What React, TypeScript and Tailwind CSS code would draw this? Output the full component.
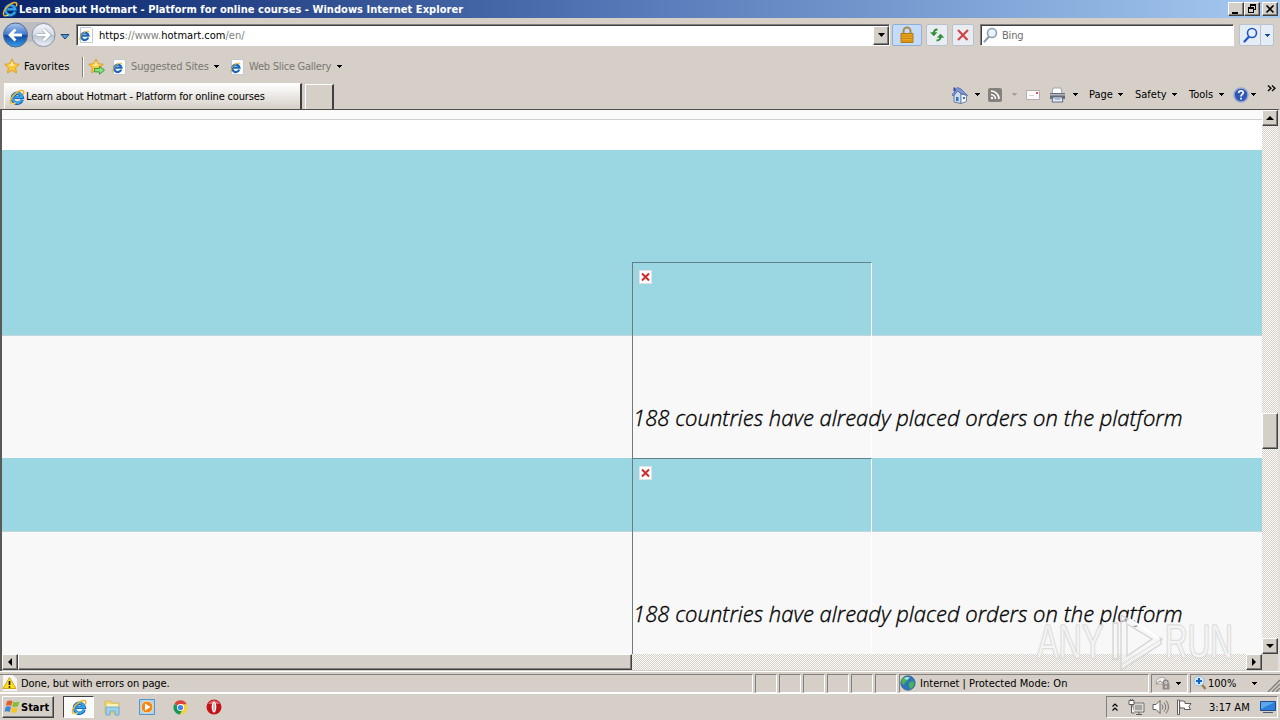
import type { ReactNode } from 'react'
import clsx from 'clsx'

const raised =
  'border border-t-white border-l-white border-r-[#404040] border-b-[#404040] bg-[#d4d0c8] shadow-[inset_-1px_-1px_0_#808080]'
const sunken = 'border border-t-[#808080] border-l-[#808080] border-r-white border-b-white'
const track = 'bg-[repeating-conic-gradient(#d4d0c8_0_25%,#fcfbfa_0_50%)] bg-[length:2px_2px]'

function Arrow({ className, fill = '#000' }: { className?: string; fill?: string }) {
  return (
    <svg width="5" height="3" viewBox="0 0 5 3" className={clsx('shrink-0', className)} shapeRendering="crispEdges">
      <path d="M0 0h5v1H4v1H3v1H2V2H1V1H0z" fill={fill} />
    </svg>
  )
}

function IeLogo({ size = 16, className }: { size?: number; className?: string }) {
  return (
    <svg width={size} height={size} viewBox="0 0 16 16" fill="none" className={clsx('shrink-0', className)}>
      <path d="M13.2 10.6A5 5 0 1 1 13.3 8.4H5.2" stroke="#135bab" strokeWidth="3.4" />
      <path d="M13 10.6A4.9 4.9 0 1 1 13.2 8.2H5.4" stroke="#36a8ea" strokeWidth="2" />
      <path d="M2.4 14.6C-.2 12.8 3 6.6 8 3.3c3.3-2.2 6.6-2.6 6.8-.4.1 1-.4 1.9-1 2.7" stroke="#eeb52a" strokeWidth="1.5" />
      <path d="M2.4 14.6c1 .6 2.6.1 4.2-.8" stroke="#fbd75c" strokeWidth="1.4" />
    </svg>
  )
}

function IePage({ className }: { className?: string }) {
  return (
    <svg width="15" height="16" viewBox="0 0 15 16" fill="none" className={clsx('shrink-0', className)}>
      <path d="M2.500.5h10.500l1.500 1.500v13.500h-12z" fill="#fff" stroke="#c3c9d1" />
      <path d="M10.300 10.700A3.700 3.700 0 1 1 10.500 8.600H4.200" stroke="#1a69bd" strokeWidth="2.200" />
      <path d="M2.200 13.500C.6 11.800 3.600 6.700 7.100 4.900c2-1.100 4.200-1 4 .6" stroke="#e5b02f" />
    </svg>
  )
}

function Star({ add, className }: { add?: boolean; className?: string }) {
  return (
    <svg width="17" height="17" viewBox="0 0 17 17" className={clsx('shrink-0', className)}>
      <path
        d="M8 .9l2.200 4.800 5.100.6-3.800 3.500 1 5.100L8 12.400l-4.500 2.500 1-5.100L.7 6.300l5.100-.6z"
        fill="#fcc736"
        stroke="#dda02c"
      />
      <path d="M8 3.200l1.300 3.300 3 .4-5.500 1.200-3.300-1 3.200-.5z" fill="#fff0a3" />
      {add && <path d="M6.500 10.500h5V8.200l5 4-5 4v-2.300h-5z" fill="#8ddf7a" stroke="#2c963b" strokeWidth=".9" />}
    </svg>
  )
}

function Lens({ className, glass, handle }: { className?: string; glass: string; handle: string }) {
  return (
    <svg width="15" height="16" viewBox="0 0 15 16" fill="none" className={clsx('shrink-0', className)}>
      <path d="M6 9.500L1.500 14.500" stroke={handle} strokeWidth="2.200" strokeLinecap="round" />
      <circle cx="9" cy="6" r="4.500" fill={glass} stroke={handle} strokeWidth="1.600" />
    </svg>
  )
}

function TitleBar() {
  return (
    <header className="flex h-[18px] items-center bg-linear-to-r from-[#0a246a] via-[#587ab9] to-[#a6caf0] pr-[2px] pl-[2px]">
      <IeLogo />
      <h1 className="mt-[2px] ml-px flex-1 text-[11px] font-bold tracking-[0.04px] whitespace-nowrap text-white">
        Learn about Hotmart - Platform for online courses - Windows Internet Explorer
      </h1>
      <div className={clsx(raised, 'h-[14px] w-4')}>
        <svg width="14" height="12" viewBox="0 0 14 12">
          <path d="M3 9h6v2H3z" />
        </svg>
      </div>
      <div className={clsx(raised, 'mr-[2px] h-[14px] w-4')}>
        <svg width="14" height="12" viewBox="0 0 14 12" shapeRendering="crispEdges">
          <path d="M5 1h6v2H5zM10 3h1v4h-1zM8 6h2v1H8zM5 3h1v1H5zM3 4h6v2H3zM3 6h1v4H3zM8 6h1v4H8zM3 9h6v1H3z" />
        </svg>
      </div>
      <div className={clsx(raised, 'h-[14px] w-4')}>
        <svg width="14" height="12" viewBox="0 0 14 12">
          <path d="M3.500 2.500l7 7m0-7l-7 7" stroke="#000" strokeWidth="1.600" />
        </svg>
      </div>
    </header>
  )
}

function ToolButton({ className, children }: { className?: string; children: ReactNode }) {
  return (
    <div
      className={clsx(
        'flex h-[22px] shrink-0 items-center justify-center rounded-[2px] border',
        className
      )}
    >
      {children}
    </div>
  )
}

function AddressRow() {
  return (
    <div className="flex h-[34px] items-center">
      <svg width="58" height="30" viewBox="0 0 58 30" className="ml-[2px] shrink-0">
        <defs>
          <linearGradient id="back" x2="0" y2="1">
            <stop offset="0" stopColor="#a9c7ed" />
            <stop offset=".48" stopColor="#3f78cd" />
            <stop offset=".52" stopColor="#11479f" />
            <stop offset="1" stopColor="#3aa0ee" />
          </linearGradient>
          <linearGradient id="forward" x2="0" y2="1">
            <stop offset="0" stopColor="#f4f7fb" />
            <stop offset=".5" stopColor="#d2dae6" />
            <stop offset=".52" stopColor="#b9c3d2" />
            <stop offset="1" stopColor="#eff3f8" />
          </linearGradient>
        </defs>
        <path d="M13 2h28a12.500 12.500 0 0 1 0 25q-7 0-10-5h-6q-5 6-12 5" fill="#bdbcc0" />
        <circle cx="13.500" cy="15" r="12" fill="url(#back)" stroke="#52698f" />
        <circle cx="41.500" cy="15" r="11.500" fill="url(#forward)" stroke="#8b95a6" />
        <path d="M20 15H8m5.500-5.500L8 15l5.500 5.500" fill="none" stroke="#fff" strokeWidth="2.800" />
        <path d="M35 15h12m-5.500-5.500L47 15l-5.500 5.500" fill="none" stroke="#9da8b7" strokeWidth="4" />
        <path d="M35 15h12m-5.500-5.500L47 15l-5.500 5.500" fill="none" stroke="#fff" strokeWidth="2.600" />
      </svg>
      <svg width="10" height="6" viewBox="0 0 10 6" className="mt-[3px] shrink-0">
        <path d="M1 .5h8L5 5z" fill="#4c9de0" stroke="#23466f" />
      </svg>
      <div className="ml-[6px] flex h-[22px] w-[814px] items-center border border-t-[#808080] border-r-white border-b-white border-l-[#808080] bg-white pl-px shadow-[inset_1px_1px_0_#404040]">
        <IePage />
        <p className="mt-[2px] ml-[6px] flex-1 text-[11px] tracking-[0.02px] whitespace-nowrap text-[#808080]">
          <span className="text-black">https</span>://www.<span className="text-black">hotmart.com</span>/en/
        </p>
        <div className={clsx(raised, 'flex h-[19px] w-4 items-center justify-center')}>
          <svg width="7" height="4" viewBox="0 0 7 4">
            <path d="M0 0h7L3.500 4z" />
          </svg>
        </div>
      </div>
      <ToolButton className="ml-[2px] w-[30px] border-[#8fafd8] bg-[#c5dcf9]">
        <svg width="16" height="18" viewBox="0 0 16 18">
          <path d="M4.500 8V5a3.500 3.500 0 0 1 7 0v3" fill="none" stroke="#a58c50" strokeWidth="2" />
          <path d="M2 7.500h12v9H2z" fill="#e8a722" stroke="#b27912" />
          <path d="M2 10h12M2 12.500h12M2 15h12" stroke="#c8860f" />
        </svg>
      </ToolButton>
      <ToolButton className="ml-1 w-[22px] border-[#b9c1cc] bg-[#e9edf2]">
        <svg width="16" height="16" viewBox="0 0 16 16" fill="#2e8b34" stroke="#2e8b34" strokeWidth="1.800">
          <path d="M8.500 2.500Q5 2.500 4.800 6M7.500 13.500Q11.300 13.500 11.500 10" fill="none" />
          <path d="M1.500 5.500h6.500L4.800 9zM8.300 10.500h6.500L11.500 7z" strokeWidth=".4" />
        </svg>
      </ToolButton>
      <ToolButton className="ml-1 w-[22px] border-[#b9c1cc] bg-[#e9edf2]">
        <svg width="14" height="14" viewBox="0 0 14 14" fill="none" stroke="#d0454a" strokeWidth="2.200">
          <path d="M2 2l9.500 10M12 2L2 12" />
        </svg>
      </ToolButton>
      <div className="ml-[6px] flex h-[22px] w-[254px] items-center border border-t-[#808080] border-r-white border-b-white border-l-[#808080] bg-white shadow-[inset_1px_1px_0_#404040]">
        <Lens className="ml-[2px]" glass="#e9f3fb" handle="#8f9fae" />
        <span className="mt-[2px] ml-[4px] text-[11px] tracking-[-0.2px] text-[#6d6d6d]">Bing</span>
      </div>
      <ToolButton className="ml-[5px] w-[22px] border-[#b9c1cc] bg-[#e4ecf6]">
        <Lens glass="#e3effd" handle="#2457c3" />
      </ToolButton>
      <ToolButton className="-ml-px w-[14px] border-[#b9c1cc] bg-[#e4ecf6]">
        <Arrow fill="#174a9c" />
      </ToolButton>
    </div>
  )
}

function FavoritesRow() {
  return (
    <div className="flex h-[29px] items-center text-[11px] whitespace-nowrap">
      <Star className="ml-1" />
      <span className="mt-[2px] ml-[3px] w-[58px] tracking-[0.1px]">Favorites</span>
      <div className="h-[20px] w-[2px] border-l border-[#808080] bg-white" />
      <Star add className="ml-[4px]" />
      <IePage className="ml-[6px]" />
      <span className="mt-[2px] ml-[5px] w-[83px] tracking-[-0.14px] text-[#7b7772]">Suggested Sites</span>
      <Arrow />
      <IePage className="ml-[10px]" />
      <span className="mt-[2px] ml-[5px] w-[88px] tracking-[-0.25px] text-[#7b7772]">Web Slice Gallery</span>
      <Arrow />
    </div>
  )
}

function CommandBar() {
  return (
    <div className="flex h-[27px] items-center text-[11px] whitespace-nowrap [&_span]:mt-[2px]">
      <svg width="18" height="18" viewBox="0 0 18 18">
        <path d="M3 9v7l7 1.500V8L7 4z" fill="#cfdcec" stroke="#6b7c9f" />
        <path d="M10 8v9.500l5.500-2V9z" fill="#eef4fb" stroke="#7588aa" />
        <path d="M1 9l5.500-7.500L10 3l6.500 6.500L10 7.500 6.500 5 2.500 10z" fill="#7f9ad2" stroke="#4a64ab" strokeWidth=".8" />
        <path d="M2.500 1.500h2V5h-2z" fill="#2d449c" />
        <path d="M5 11h2.500v4H5zM12 11h2v2h-2z" fill="#2f74c0" />
      </svg>
      <Arrow className="ml-[6px]" />
      <svg width="14" height="14" viewBox="0 0 14 14" className="ml-[8px]" fill="none" stroke="#fff" strokeWidth="1.600">
        <rect width="14" height="14" rx="2" fill="#85827e" stroke="none" />
        <path d="M3 6.500A4.500 4.500 0 0 1 7.500 11M3 3a8 8 0 0 1 8 8" />
        <circle cx="4" cy="10" r="1.200" fill="#fff" stroke="none" />
      </svg>
      <Arrow className="ml-[10px]" fill="#a39f99" />
      <svg width="14" height="10" viewBox="0 0 14 10" className="ml-[9px]">
        <path d="M.5.5h13v9H.5z" fill="#fcfafa" stroke="#b2adb0" />
        <path d="M10 2h2v2h-2z" fill="#d85663" />
        <path d="M3 5.500h5" stroke="#d6cdd4" />
      </svg>
      <svg width="17" height="16" viewBox="0 0 17 16" className="ml-[9px]">
        <path d="M4 1h8l1 6H3z" fill="#fff" stroke="#a1a5ac" />
        <path d="M1 6h15v6H1z" fill="#666b75" />
        <path d="M1 7h15v1.500H1z" fill="#b3b8bf" />
        <path d="M4 10h9l1 5H3z" fill="#e7eef7" stroke="#676e7a" />
        <path d="M5.500 12h6" stroke="#588bc0" />
      </svg>
      <Arrow className="ml-[7px]" />
      <span className="ml-[11px] w-[29px]">Page</span>
      <Arrow />
      <span className="ml-[12px] w-[36px]">Safety</span>
      <Arrow className="ml-px" />
      <span className="ml-[12px] w-[30px]">Tools</span>
      <Arrow />
      <svg width="16" height="16" viewBox="0 0 16 16" className="ml-[9px]">
        <circle cx="8" cy="8" r="7" fill="#3258b5" stroke="#98a9cf" strokeWidth="1.500" />
        <path d="M5.700 6c0-3.200 4.800-2.800 4.500 0C10 7.500 8 7.300 8 9.400M8 10.800v1.800" stroke="#fff" strokeWidth="1.700" fill="none" />
      </svg>
      <Arrow className="ml-[2px]" />
      <svg width="9" height="7" viewBox="0 0 9 7" className="mr-1 ml-[11px] -mt-[13px]" fill="none" stroke="#000" strokeWidth="1.300">
        <path d="M1 .5l3 2.700L1 6M5 .5l3 2.700L5 6" />
      </svg>
    </div>
  )
}

function TabRow() {
  return (
    <div className="flex h-[28px] justify-between">
      <div className="flex items-end pl-1">
        <div className="flex h-[26px] w-[298px] items-center border-t border-r-2 border-l border-t-white border-r-[#404040] border-l-white bg-linear-to-b from-white to-[#d5cfc7] pl-[4px]">
          <IeLogo />
          <span className="mt-[2px] ml-px text-[11px] tracking-[-0.16px] whitespace-nowrap">
            Learn about Hotmart - Platform for online courses
          </span>
        </div>
        <div className="ml-[3px] h-[25px] w-[29px] border-t border-r-2 border-l border-t-white border-r-[#404040] border-l-white" />
      </div>
      <CommandBar />
    </div>
  )
}

function BrokenImage({ className }: { className: string }) {
  return (
    <figure
      className={clsx(
        'absolute left-[630px] h-[196px] w-[240px] border-t border-r border-l border-t-[#5f8188] border-r-white border-l-[#707b7d]',
        className
      )}
    >
      <svg width="13" height="14" viewBox="0 0 13 14" className="mt-[7px] ml-[6px]">
        <path d="M.5.500h12v13H.5z" fill="#fff" stroke="#e6e2e1" />
        <path d="M3 3.500l7 7m0-7l-7 7" stroke="#cf2b2b" strokeWidth="2" />
      </svg>
      <figcaption className="mt-[117px] font-['Open_Sans',sans-serif] text-[22px] leading-[32px] font-light tracking-[0.025px] whitespace-nowrap text-black italic [-webkit-text-stroke:0.35px_#000000]">
        188 countries have already placed orders on the platform
      </figcaption>
    </figure>
  )
}

function ScrollButton({ d, className }: { d: string; className?: string }) {
  return (
    <div className={clsx(raised, 'flex h-4 w-4 shrink-0 items-center justify-center', className)}>
      <svg width="8" height="8" viewBox="0 0 8 8">
        <path d={d} />
      </svg>
    </div>
  )
}

function Page() {
  return (
    <main className="flex h-[562px] flex-col border-t border-r-2 border-l-2 border-t-[#504e4c] border-r-[#e3dfda] border-l-[#5b5957]">
      <div className="flex h-[544px]">
        <div className="relative flex-1 overflow-hidden bg-[#f8f8f8]">
          <div className="h-[10px] border-b border-[#cfcfcf] bg-[#fafafa]" />
          <div className="h-[30px] bg-white" />
          <div className="h-[186px] border-b border-[#c0d6da] bg-[#9bd7e2]" />
          <div className="h-[122px]" />
          <div className="h-[74px] border-b border-[#c0d6da] bg-[#9bd7e2]" />
          <BrokenImage className="top-[152px]" />
          <BrokenImage className="top-[348px]" />
        </div>
        <div className={clsx(track, 'flex w-4 flex-col')}>
          <ScrollButton d="M0 6h8L4 2z" />
          <div className={clsx(raised, 'mt-[287px] h-[36px]')} />
          <ScrollButton className="mt-auto" d="M0 2h8L4 6z" />
        </div>
      </div>
      <div className="flex h-4">
        <div className={clsx(track, 'flex flex-1')}>
          <ScrollButton d="M6 0v8L2 4z" />
          <div className={clsx(raised, 'w-[614px]')} />
          <ScrollButton className="ml-auto" d="M2 0v8l4-4z" />
        </div>
        <div className="w-4 bg-[#d5cfc7]" />
      </div>
    </main>
  )
}

function StatusBar() {
  return (
    <div className="flex h-[22px] items-center gap-[2px] border-t border-white pt-px text-[11px] whitespace-nowrap [&_span]:mt-[2px]">
      <div className={clsx(sunken, 'flex h-[19px] w-[753px] items-center border-l-0 pl-[2px]')}>
        <svg width="16" height="16" viewBox="0 0 16 16">
          <path d="M1 0h10l4 4v12H1z" fill="#f6f6f6" />
          <path d="M7.500 2.500l6.500 11H1z" fill="#ffdf19" stroke="#d0a816" />
          <path d="M7.500 6v4M7.500 11.200v1.500" stroke="#000" strokeWidth="1.600" />
        </svg>
        <span className="ml-[3px] tracking-[-0.1px]">Done, but with errors on page.</span>
      </div>
      {[0, 1, 2, 3, 4, 5].map((pane) => (
        <div key={pane} className={clsx(sunken, 'h-[19px] w-[22px]')} />
      ))}
      <div className={clsx(sunken, 'flex h-[19px] w-[250px] items-center')}>
        <svg width="16" height="16" viewBox="0 0 16 16">
          <circle cx="8" cy="8" r="7.200" fill="#2c75bd" stroke="#2b5b7c" strokeWidth=".7" />
          <path d="M2 4l4-2.500 3 1L7 6 5 7.500 4 10 1.500 8zM9 8l3-2 2.500 2-1.500 4-3 2-1-3z" fill="#4bb553" />
          <path d="M4 3.500Q7 1 10 2.500L7 5z" fill="#a9e3ee" />
        </svg>
        <span className="ml-[4px] tracking-[0.02px]">Internet | Protected Mode: On</span>
      </div>
      <div className={clsx(sunken, 'flex h-[19px] w-[37px] items-center pl-[3px]')}>
        <svg width="17" height="16" viewBox="0 0 17 16">
          <path d="M1 9a6 6 0 0 1 9-6v6z" fill="#f0eeec" stroke="#aaa6a2" />
          <path d="M1 9l4-3 3 2" fill="none" stroke="#8f8b87" />
          <path d="M8.500 9V7.500a2.300 2.300 0 0 1 4.600 0V9" fill="none" stroke="#85817e" strokeWidth="1.300" />
          <path d="M7.500 9h7v5.500h-7z" fill="#918d8a" />
          <path d="M11 10.500v2.500" stroke="#fff" />
        </svg>
        <Arrow className="ml-[4px]" />
      </div>
      <div className={clsx(sunken, 'flex h-[19px] flex-1 items-center border-r-0 pl-[2px]')}>
        <svg width="14" height="16" viewBox="0 0 14 16" fill="none">
          <path d="M8.500 9l4 5" stroke="#9a7c46" strokeWidth="2.200" />
          <circle cx="6" cy="6" r="5" fill="#d9ebfa" stroke="#9bbbd8" />
          <path d="M6 3v6M3 6h6" stroke="#1764c0" strokeWidth="2.200" />
        </svg>
        <span className="ml-px w-[44px]">100%</span>
        <Arrow />
        <svg width="14" height="14" viewBox="0 0 14 14" className="mt-auto ml-auto" stroke="#85817b" strokeWidth="1.500">
          <path d="M2 14L14 2M6 14l8-8M10 14l4-4" />
        </svg>
      </div>
    </div>
  )
}

function TaskBar() {
  return (
    <footer className="flex h-[27px] items-center border-t border-white text-[11px] whitespace-nowrap [&_span]:mt-[2px]">
      <div className={clsx(raised, 'ml-[2px] flex h-[22px] w-[52px] items-center pl-px')}>
        <svg width="17" height="16" viewBox="0 0 17 16">
          <path d="M3 2.200q3-1.500 5.500 0L7.200 7Q5 5.700 2 6.800z" fill="#e65d29" />
          <path d="M9.300 2.700q3 1.300 6-.2L14 7.200q-3 1.300-5.800.2z" fill="#85bd36" />
          <path d="M1.700 8Q4.500 6.700 7 8l-1.400 5Q3 11.500.5 12.700z" fill="#3d86d6" />
          <path d="M8 8.300q3 1.300 5.800.1l-1.400 4.800q-3 1.200-5.700-.1z" fill="#f6c526" />
        </svg>
        <span className="font-bold">Start</span>
      </div>
      <div className="ml-[9px] flex h-[22px] w-[31px] items-center justify-center border border-t-[#404040] border-r-white border-b-white border-l-[#404040] bg-[#fafaf9]">
        <IeLogo />
      </div>
      <svg width="17" height="17" viewBox="0 0 17 17" className="ml-[10px]">
        <path d="M1 2h6l1 2h7v10H1z" fill="#efd778" stroke="#cfb14f" strokeWidth=".7" />
        <path d="M3 5h11v4H3z" fill="#fff3b7" />
        <path d="M2 8h13v8h-4v-4H6v4H2z" fill="#9bd0ec" stroke="#63a5cf" strokeWidth=".8" />
      </svg>
      <svg width="16" height="16" viewBox="0 0 16 16" className="ml-[18px]">
        <path d="M.5.5h15v15H.5z" fill="#a9d3f1" stroke="#5596cc" />
        <circle cx="8" cy="8" r="6" fill="#f18a19" stroke="#fbe1bd" />
        <path d="M6 4.500v7L11.500 8z" fill="#fff" />
      </svg>
      <svg width="15" height="15" viewBox="0 0 16 16" className="ml-[18px]">
        <path d="M8 8L1.500 4A7.500 7.500 0 0 1 14.600 4.500z" fill="#db4437" />
        <path d="M8 8h0L1.500 4.200A7.500 7.500 0 0 0 7.500 15.500L11 9z" fill="#159b58" />
        <path d="M8 4.500h6.600A7.500 7.500 0 0 1 7.500 15.500L11 9z" fill="#f9cf3d" />
        <circle cx="8" cy="8" r="3.700" fill="#fff" />
        <circle cx="8" cy="8" r="2.800" fill="#4683e8" />
      </svg>
      <svg width="16" height="16" viewBox="0 0 16 16" className="ml-[18px]">
        <circle cx="8" cy="8" r="7.500" fill="#c31218" />
        <path d="M2 5a7 7 0 0 1 12 0z" fill="#df6265" />
        <ellipse cx="8" cy="8" rx="2.300" ry="5.500" fill="#fff" />
        <ellipse cx="8" cy="8" rx=".8" ry="4.500" fill="#dd9999" />
      </svg>
      <div className={clsx(sunken, 'mr-[2px] ml-auto flex h-[22px] w-[172px] items-center')}>
        <svg width="6" height="8" viewBox="0 0 6 8" className="ml-[5px]" fill="none" stroke="#000" strokeWidth="1.200">
          <path d="M.5 3.500L3 1l2.500 2.500M.5 7.500L3 5l2.500 2.500" />
        </svg>
        <svg width="17" height="16" viewBox="0 0 17 16" className="ml-[10px]" fill="none">
          <path d="M5.500 4.500h10v8h-10z" fill="#aaa7a3" stroke="#fff" strokeWidth="2" />
          <path d="M5 4h11v9H5zM8 15.500h6M11 13v2.500" stroke="#5f5c59" />
          <path d="M1 1.500h5v4H1zM2.500 0v2M4.500 0v2M3.500 6v8h3" fill="#fff" stroke="#5f5c59" />
        </svg>
        <svg width="17" height="16" viewBox="0 0 17 16" className="ml-[7px]" fill="none">
          <path d="M1 5.500h3L8 1.500v13l-4-4H1z" fill="#fff" stroke="#605d5a" />
          <path d="M10 5.500q2 2.500 0 5M12 3.500q3.500 4.500 0 9M14 1.500q5 6.500 0 13" stroke="#777370" />
        </svg>
        <svg width="17" height="16" viewBox="0 0 17 16" className="ml-[7px]">
          <path d="M3 2.500q3-1.500 6 0v2h6l-2 3 1.500 3H8.500v-1.500H4z" fill="#fff" stroke="#605d5a" />
          <path d="M1.500 1h2v14.500h-2z" fill="#fff" stroke="#605d5a" />
        </svg>
        <span className="ml-[16px] w-[42px]">3:17 AM</span>
        <svg width="16" height="14" viewBox="0 0 16 14" className="ml-[9px]">
          <path d="M.5 1.500h15v9H.5z" fill="#2f7ed8" stroke="#1d4c91" />
          <path d="M1 2h14L1 9z" fill="#5ca6ea" />
          <path d="M3 12.500h10" stroke="#4c5c6e" />
        </svg>
      </div>
    </footer>
  )
}

function Watermark() {
  return (
    <div className="absolute top-[610px] left-[1037px] flex h-[62px] w-[198px] items-center">
      <span className="w-[66px] origin-left scale-x-[0.66] font-['Liberation_Sans',sans-serif] text-[49px] leading-[36px] text-white/85 [-webkit-text-stroke:1px_#dddddd] [text-shadow:0_0_2px_#bbbbbb]">
        ANY
      </span>
      <svg width="62" height="62" viewBox="0 0 62 62" className="shrink-0" fill="#f6f6f6a0" stroke="#d3d3d3" strokeWidth="1.300">
        <path d="M10 13h5v36h-5zM18 5v50l41-26zM24 14l25 15-25 17z" fillRule="evenodd" />
        <path d="M18 55v5l40-26v-5" />
        <path d="M26 9l30 19" stroke="#fff" strokeWidth="2.500" />
      </svg>
      <span className="w-[66px] origin-left scale-x-[0.64] font-['Liberation_Sans',sans-serif] text-[49px] leading-[36px] text-white/85 [-webkit-text-stroke:1px_#dddddd] [text-shadow:0_0_2px_#bbbbbb]">
        RUN
      </span>
    </div>
  )
}

export default function App() {
  return (
    <div className="relative h-[720px] w-[1280px] overflow-hidden bg-[#d5cfc7] font-['DejaVu_Sans_Condensed','DejaVu_Sans',sans-serif] text-black">
      <TitleBar />
      <AddressRow />
      <FavoritesRow />
      <TabRow />
      <Page />
      <StatusBar />
      <TaskBar />
      <Watermark />
    </div>
  )
}
